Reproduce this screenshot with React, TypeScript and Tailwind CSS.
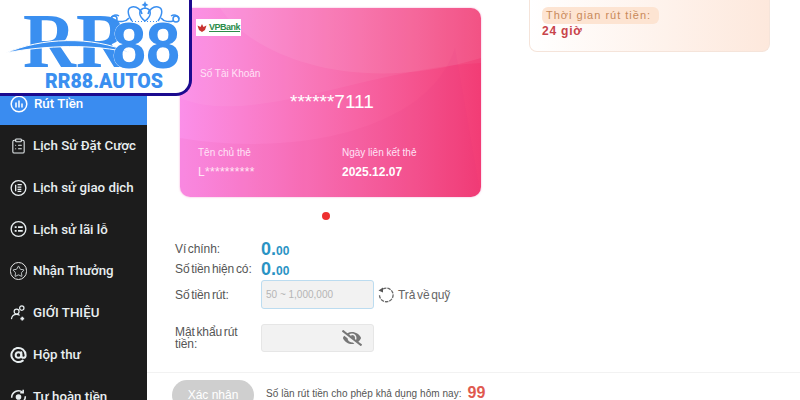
import React from 'react';
import { AtSign, ClipboardList, Star } from 'lucide-react';
import { FaEyeSlash } from 'react-icons/fa';

function CircleBars() {
  return (
    <svg width="18" height="18" viewBox="0 0 18 18" fill="none" stroke="currentColor" strokeWidth="1.5">
      <circle cx="9" cy="9" r="7.8" />
      <path d="M6 8v4M9 6v6M12 9v3" strokeLinecap="round" />
    </svg>
  );
}

function CircleList() {
  return (
    <svg width="18" height="18" viewBox="0 0 18 18" fill="none" stroke="currentColor" strokeWidth="1.4">
      <circle cx="9" cy="9" r="7.8" />
      <path d="M6 5.500v7M8 5.500h4.500M8 8h4M8 10.500h4M8 12.500h4" />
    </svg>
  );
}

function CircleRows() {
  return (
    <svg width="18" height="18" viewBox="0 0 18 18" fill="none" stroke="currentColor" strokeWidth="1.4">
      <circle cx="9" cy="9" r="7.800" />
      <path d="M5 7h2M5 11h2M8.500 7h5M8.500 11h5" strokeWidth="2" />
    </svg>
  );
}

function CircleStar() {
  return (
    <span className="relative flex h-[18px] w-[18px] items-center justify-center rounded-full border-[1.4px] border-[#e8e8e8]">
      <Star size={13} strokeWidth={1.5} />
    </span>
  );
}

function Invite() {
  return (
    <svg width="18" height="18" viewBox="0 0 18 18" fill="none" stroke="currentColor" strokeWidth="1.300">
      <circle cx="7" cy="7.500" r="2.600" />
      <path d="M1.500 15.500c.5-3.500 2.500-5 5.500-5 1.500 0 2.500.4 3.200 1" />
      <circle cx="12.500" cy="3.800" r="2.300" />
      <path d="M13 13v4M11 15h4" strokeWidth="1.800" />
    </svg>
  );
}

function Cashback() {
  return (
    <svg width="20" height="20" viewBox="0 0 20 20" fill="none" stroke="currentColor" strokeWidth="1.800">
      <path d="M2 11a8 8 0 0 1 13-6.500M18 9a8 8 0 0 1-13 6.500" />
      <path d="M15.500 1.500v3.500H12M4.500 18.500V15H8" />
      <circle cx="10" cy="10" r="2.400" fill="currentColor" />
    </svg>
  );
}

const menu = [
  { label: 'Lịch Sử Đặt Cược', icon: <ClipboardList size={18} strokeWidth={1.5} /> },
  { label: 'Lịch sử giao dịch', icon: <CircleList /> },
  { label: 'Lịch sử lãi lỗ', icon: <CircleRows /> },
  { label: 'Nhận Thưởng', icon: <CircleStar /> },
  { label: 'GIỚI THIỆU', icon: <Invite /> },
  { label: 'Hộp thư', icon: <AtSign size={20} strokeWidth={2.8} /> },
  { label: 'Tự hoàn tiền', icon: <Cashback /> },
];

function Logo() {
  return (
    <div className="absolute top-0 left-0 z-10 h-[96px] w-[192px] rounded-br-[16px] border-r-[3px] border-b-[3px] border-[#1b0a8f] bg-white">
      <svg width="189" height="93" viewBox="0 0 189 93">
        <text x="23" y="67" fill="#3a8ff0" fontFamily="Liberation Serif" fontWeight="700" fontSize="79" textLength="106" lengthAdjust="spacingAndGlyphs">RR</text>
        <path d="M6 53C40 38 92 35 131 53C95 44 45 45 6 53Z" fill="#3a8ff0" stroke="#fff" strokeWidth="1" />
        <text x="112" y="68" fill="#3a8ff0" stroke="#fff" strokeWidth="0.6" paintOrder="stroke" fontFamily="Liberation Sans" fontWeight="700" fontSize="65" textLength="68" lengthAdjust="spacingAndGlyphs">88</text>
        <g fill="none" stroke="#3a8ff0" strokeWidth="1.500">
          <path d="M132 21c-5-7-5-13 0-14c5-1 9 3 10 7M158 21c5-7 5-13 0-14c-5-1-9 3-10 7" />
          <path d="M145 21c-7-5-7-12 0-13c7 1 7 8 0 13Z" />
          <circle cx="114" cy="19" r="3" />
          <circle cx="176" cy="19" r="3" />
          <path d="M117 21c3 1 9 1 12-3M173 21c-3 1-9 1-12-3M111 19c1-4 5-5 8-3M179 19c-1-4-5-5-8-3" />
        </g>
        <path d="M132 21.500h26" stroke="#3a8ff0" strokeWidth="1" strokeDasharray="1 2" />
        <path d="M145 1l1 2.500L148.500 5 146 6l-1 2.500L144 6l-2.500-1L144 3.500z" fill="#3a8ff0" />
        <text x="45" y="88" fill="#3a8ff0" fontFamily="Roboto" fontWeight="900" fontSize="21" textLength="118" lengthAdjust="spacingAndGlyphs">RR88.AUTOS</text>
      </svg>
    </div>
  );
}

function BankCard() {
  return (
    <div className="relative h-[189px] w-[301px] overflow-hidden rounded-[10px] bg-gradient-to-r from-[#fb8fe9] to-[#f23c75] text-white shadow-[0_0_2px_rgba(240,120,190,0.7)]">
      <svg className="absolute inset-0" width="301" height="189" viewBox="0 0 301 189">
        <path d="M40 0C70 45 170 90 301 50V0Z" fill="#fff" opacity="0.07" />
        <path d="M0 90C70 120 190 60 301 55V0H0Z" fill="#fff" opacity="0.05" />
        <path d="M0 130C120 150 250 120 275 40L301 189H0Z" fill="#e0307a" opacity="0.07" />
      </svg>
      <div className="relative flex h-full flex-col">
        <div className="mt-[11px] ml-[16px] flex h-[17px] w-[45px] items-center gap-[2px] bg-white px-[1px]">
          <svg width="10" height="8" viewBox="0 0 10 8">
            <path d="M5 0l1.500 3L9.500 1.500 8 6 5 8 2 6 .5 1.500 3.500 3z" fill="#c8322f" />
          </svg>
          <span className="text-[9px] font-bold tracking-[-0.5px] text-[#2c8c4a] underline">VPBank</span>
        </div>
        <p className="mt-[32px] ml-[20px] text-[10px] leading-[12px] text-[#ffe2f6]">Số Tài Khoản</p>
        <p className="mt-[10px] ml-[110px] text-[19px] leading-[24px]">******7111</p>
        <div className="mt-[33px] ml-[18px] flex">
          <div className="w-[144px]">
            <p className="text-[10px] leading-[12px] text-[#ffe2f6]">Tên chủ thẻ</p>
            <p className="mt-[6px] text-[12px] leading-[14px] tracking-[0.3px] text-[#ffe6f4]">L**********</p>
          </div>
          <div>
            <p className="text-[10px] leading-[12px] text-[#ffe2f6]">Ngày liên kết thẻ</p>
            <p className="mt-[6px] text-[12px] leading-[14px] font-bold">2025.12.07</p>
          </div>
        </div>
      </div>
    </div>
  );
}

function Amount() {
  return (
    <span className="font-bold tracking-normal text-[#2a93c4]">
      <span className="text-[18px]">0.</span>
      <span className="text-[12px]">00</span>
    </span>
  );
}

export default function App() {
  return (
    <div className="relative flex h-[400px] w-[800px] overflow-hidden bg-white font-['Liberation_Sans',sans-serif]">
      <Logo />
      <aside className="w-[147px] shrink-0 bg-[#1c1c1c] font-['Roboto',sans-serif] text-[13.3px] font-medium text-[#e8eef0]">
        <div className="flex h-[125px] items-end gap-[6px] bg-[#3a8cf0] pb-[12px] pl-[10px] text-white">
          <CircleBars />
          <span className="leading-[18px]">Rút Tiền</span>
        </div>
        <ul className="flex flex-col">
          {menu.map((m) => (
            <li key={m.label} className="flex h-[41.800px] items-center gap-[6px] pl-[10px]">
              <span className="flex w-[17px] justify-center">{m.icon}</span>
              <span className="whitespace-nowrap">{m.label}</span>
            </li>
          ))}
        </ul>
      </aside>
      <main className="flex min-w-0 flex-1 flex-col">
        <div className="flex items-start pl-[33px]">
          <div className="flex flex-col items-center pt-[8px]">
            <BankCard />
            <span className="mt-[15px] mr-[10px] h-[8px] w-[8px] rounded-full bg-[#ee3030]" />
          </div>
          <div className="ml-[48px] flex h-[52px] w-[241px] flex-col rounded-b-[8px] border border-t-0 border-[#f5e4da] bg-gradient-to-r from-white to-[#fde8dc] pt-[7px] pl-[12px]">
            <span className="w-[117px] rounded-[6px] bg-[#fde4d2] pl-[4px] text-[11px] leading-[17px] tracking-[1px] text-[#c8895a]">Thời gian rút tiền:</span>
            <span className="text-[12px] leading-[15px] font-bold tracking-[0.8px] text-[#c8434a]">24 giờ</span>
          </div>
        </div>
        <div className="mt-[19px] flex flex-col pl-[28px] text-[12px] tracking-[-0.1px] [word-spacing:-1.5px] text-[#555]">
          <div className="flex h-[20px] items-center">
            <span className="w-[86px]">Ví chính:</span>
            <Amount />
          </div>
          <div className="flex h-[20px] items-center">
            <span className="w-[86px]">Số tiền hiện có:</span>
            <Amount />
          </div>
          <div className="mt-[1px] flex items-center">
            <span className="w-[86px]">Số tiền rút:</span>
            <div className="flex h-[29px] w-[113px] items-center rounded-[3px] border border-[#bcdcf0] bg-[#f2f2f2] pl-[4px] text-[10px] tracking-normal [word-spacing:0] text-[#b5b5b5]">50 ~ 1,000,000</div>
            <svg className="ml-[4px]" width="16" height="16" viewBox="0 0 16 16" fill="none" stroke="#666" strokeWidth="1.300">
              <path d="M5 2A6.800 6.800 0 1 1 1.500 8" strokeDasharray="3.500 1" />
              <path d="M0.500 3.500L5 0.500v5z" fill="#555" stroke="none" />
            </svg>
            <span className="ml-[4px] text-[#666]">Trả về quỹ</span>
          </div>
          <div className="mt-[15px] flex items-center">
            <span className="w-[86px] pr-[20px] leading-[12px]">Mật khẩu rút tiền:</span>
            <div className="flex h-[28px] w-[113px] items-center justify-end rounded-[3px] border border-[#e6e6e6] bg-[#f2f2f2] pr-[11px] text-[#777]">
              <FaEyeSlash size={20} />
            </div>
          </div>
        </div>
        <div className="mt-[20px] flex items-start gap-[12px] border-t border-[#f2f2f2] pt-[7px] pl-[25px]">
          <button className="h-[30px] w-[82px] rounded-full bg-[#cfcfcf] text-[12px] text-white">Xác nhận</button>
          <p className="flex h-[26px] items-center text-[10px] tracking-[0.05px] text-[#555]">
            Số lần rút tiền cho phép khả dụng hôm nay:
            <span className="ml-[6px] text-[16px] font-bold text-[#e05a50]">99</span>
          </p>
        </div>
      </main>
    </div>
  );
}
